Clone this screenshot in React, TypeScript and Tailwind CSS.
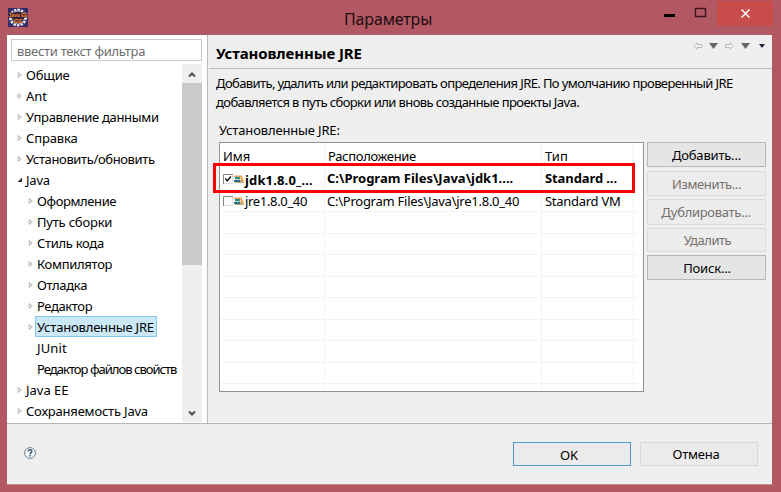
import React from "react";

type Node = { label: string; level: number; open?: boolean; leaf?: boolean; selected?: boolean; ls: string };

const tree: Node[] = [
  { label: "Общие", level: 0, ls: "tracking-[-0.2px]" },
  { label: "Ant", level: 0, ls: "tracking-normal" },
  { label: "Управление данными", level: 0, ls: "tracking-[-0.33px]" },
  { label: "Справка", level: 0, ls: "tracking-[-0.15px]" },
  { label: "Установить/обновить", level: 0, ls: "tracking-[-0.37px]" },
  { label: "Java", level: 0, open: true, ls: "tracking-[-0.2px]" },
  { label: "Оформление", level: 1, ls: "tracking-[-0.4px]" },
  { label: "Путь сборки", level: 1, ls: "tracking-[-0.2px]" },
  { label: "Стиль кода", level: 1, ls: "tracking-[-0.3px]" },
  { label: "Компилятор", level: 1, ls: "tracking-[-0.3px]" },
  { label: "Отладка", level: 1, ls: "tracking-[-0.3px]" },
  { label: "Редактор", level: 1, ls: "tracking-[-0.4px]" },
  { label: "Установленные JRE", level: 1, selected: true, ls: "tracking-[-0.18px]" },
  { label: "JUnit", level: 1, leaf: true, ls: "tracking-[0.15px]" },
  { label: "Редактор файлов свойств", level: 1, leaf: true, ls: "tracking-[-0.98px]" },
  { label: "Java EE", level: 0, ls: "tracking-normal" },
  { label: "Сохраняемость Java", level: 0, ls: "tracking-[-0.2px]" },
];

function Twisty({ node }: { node: Node }) {
  return (
    <svg className="mr-px size-[6px] shrink-0" viewBox="0 0 6 6">
      {node.open ? (
        <path d="M5 0.5V5H0.5Z" fill="#333" />
      ) : node.leaf ? null : (
        <path d="M1.2 0.6V5.4L4.2 3Z" fill="#fff" stroke="#a0a0a0" strokeWidth="0.8" />
      )}
    </svg>
  );
}

function TreeRow({ node }: { node: Node }) {
  return (
    <div className={"flex h-[21px] items-center " + (node.level ? "pl-[21px]" : "pl-[10px]")}>
      <Twisty node={node} />
      <span
        className={
          "flex h-[21px] items-center border pl-px pr-[2px] " +
          node.ls +
          (node.selected ? " border-[#86c8ea] bg-[#cbe8f8]" : " border-transparent")
        }
      >
        {node.label}
      </span>
    </div>
  );
}

function Chevron({ down }: { down?: boolean }) {
  return (
    <svg className="size-[8px]" viewBox="0 0 8 8">
      <path d={down ? "M1 2.5L4 5.5L7 2.5" : "M1 5.5L4 2.5L7 5.5"} fill="none" stroke="#505050" strokeWidth="2" />
    </svg>
  );
}

function Books() {
  return (
    <svg className="h-[8px] w-[10px] shrink-0" viewBox="0 0 10 8">
      <rect x="0" y="0.5" width="6" height="1.5" fill="#e5a25a" />
      <rect x="1" y="2" width="5" height="2" fill="#2f8a86" />
      <rect x="1" y="4" width="5" height="1" fill="#b9d3c6" />
      <rect x="0" y="5" width="6.5" height="2" fill="#2b6f86" />
      <path d="M6 0.5L7.4 0.3L10 6.5L7.3 7Z" fill="#f09a3c" />
      <path d="M1 7.4H10" stroke="#a3803f" strokeWidth="0.8" />
    </svg>
  );
}

function Check({ on }: { on?: boolean }) {
  return (
    <svg className="h-[10px] w-[10px] shrink-0" viewBox="0 0 10 10">
      <rect width="10" height="10" fill="#fff" />
      <path d="M0.5 10V0.5H10" fill="none" stroke="#858585" />
      <path d="M9.5 1V9.5H1" fill="none" stroke="#dedede" />
      {on && <path d="M2.3 4.3L4.2 6.8L8 2.5" fill="none" stroke="#111" strokeWidth="1.4" />}
    </svg>
  );
}

function Arrow({ right }: { right?: boolean }) {
  return (
    <svg className={"h-[8px] w-[9px]" + (right ? " -scale-x-100" : "")} viewBox="0 0 9 8">
      <path d="M0.7 4L4 0.7V2.5H8.4V5.5H4V7.3Z" fill="#f6f6f6" stroke="#b2b2b2" strokeWidth="0.9" />
    </svg>
  );
}

function Triangle({ small }: { small?: boolean }) {
  return (
    <svg className={small ? "h-[4px] w-[6px]" : "h-[6px] w-[9px]"} viewBox="0 0 9 6" preserveAspectRatio="none">
      <path d="M0 0H9L4.5 6Z" fill={small ? "#24203a" : "#666"} />
    </svg>
  );
}

function SideButton({ label, cls }: { label: string; cls: string }) {
  return <button className={"flex w-[119px] items-center justify-center border " + cls}>{label}</button>;
}

const gridRows = [0, 1, 2, 3, 4, 5, 6, 7];

export default function App() {
  return (
    <div className="flex h-[492px] w-[781px] flex-col overflow-hidden bg-[#b15863] font-['Noto_Sans','Open_Sans',sans-serif] text-[13px] leading-[18px] text-black">
      <header className="flex h-[35px] shrink-0">
        <svg className="ml-2 mt-2 size-[20px]" viewBox="0 0 20 20">
          <rect width="20" height="19" fill="#332b67" />
          <circle cx="10" cy="9.5" r="7.8" fill="none" stroke="#e8e4e4" strokeWidth="2.4" strokeDasharray="2.4 1.2" />
          <circle cx="10" cy="9.5" r="6.6" fill="#2b2145" stroke="#d9d5da" />
          <rect x="1" y="4.5" width="18" height="5" fill="#3a2440" />
          <g fill="#f5841f" fontWeight="bold" fontFamily="Liberation Sans" textAnchor="middle">
            <text x="10" y="9" fontSize="5">Java EE</text>
            <text x="10" y="15" fontSize="5.5">IDE</text>
          </g>
        </svg>
        <div className="flex-1 pl-[316px] pt-[8px] text-[16px] leading-[22px] tracking-[-0.15px] text-[#1c0d10]">Параметры</div>
        <svg className="mt-[7px] h-[11px] w-[44px]" viewBox="0 0 44 11">
          <rect x="0" y="7" width="11" height="3" fill="#000" />
          <rect x="31.5" y="1.5" width="10" height="8" fill="none" stroke="#3a151b" strokeWidth="1.4" />
        </svg>
        <div className="ml-[9px] mr-[8px] mt-px flex h-[25px] w-[56px] items-center justify-center bg-[#c84c4a]">
          <svg className="size-[9px]" viewBox="0 0 9 9">
            <path d="M0.5 0.5L8.5 8.5M8.5 0.5L0.5 8.5" stroke="#fff" strokeWidth="1.5" />
          </svg>
        </div>
      </header>

      <main className="ml-[7px] flex h-[450px] w-[765px] shrink-0 flex-col border-b border-[#c79297] bg-[#efefef]">
        <div className="flex h-[389px] shrink-0 border-b border-[#b5b5b5]">
          <aside className="flex w-[201px] shrink-0 flex-col border-r border-[#b9b9b9] bg-white">
            <div className="ml-[4px] mt-[4px] flex h-[22px] w-[191px] items-center border border-[#c8c8c8] pl-[5px] pt-[2px] tracking-[-0.3px] text-[#6d6d6d]">
              ввести текст фильтра
            </div>
            <div className="mt-[3px] flex h-[357px] justify-between pr-[5px]">
              <div className="w-[175px] whitespace-nowrap">
                {tree.map((n) => (
                  <TreeRow key={n.label} node={n} />
                ))}
              </div>
              <div className="flex h-[358px] w-[20px] shrink-0 flex-col bg-[#efefef]">
                <div className="flex h-[19px] items-center justify-center pt-[2px]"><Chevron /></div>
                <div className="h-[182px] bg-[#cacaca]" />
                <div className="flex flex-1 items-end justify-center pb-[5px]"><Chevron down /></div>
              </div>
            </div>
          </aside>

          <section className="flex min-w-0 flex-1 flex-col">
            <div className="ml-px flex h-[34px] shrink-0 justify-between border-b border-[#b9b9b9]">
              <h1 className="pl-[7px] pt-[7px] text-[15px] font-bold leading-[22px] tracking-[-0.1px]">Установленные JRE</h1>
              <div className="flex h-[22px] items-center pr-[7px]">
                <Arrow />
                <span className="ml-[7px] flex"><Triangle /></span>
                <span className="ml-[7px] flex"><Arrow right /></span>
                <span className="ml-[7px] flex"><Triangle /></span>
                <span className="ml-[9px] flex"><Triangle small /></span>
              </div>
            </div>
            <p className="whitespace-nowrap pl-[8px] pt-[5px] leading-[19px]">
              <span className="tracking-[-0.6px]">Добавить, удалить или редактировать определения JRE. По умолчанию проверенный JRE</span>
              <br />
              <span className="tracking-[-0.59px]">добавляется в путь сборки или вновь созданные проекты Java.</span>
            </p>
            <div className="pl-[11px] pt-[9px] tracking-[-0.15px]">Установленные JRE:</div>

            <div className="ml-[11px] mt-[3px] flex gap-[3px]">
              <div className="relative h-[250px] w-[425px] shrink-0 border border-[#929292] bg-white">
                <div className="grid h-full grid-cols-[104px_1px_216px_1px_91px_1px_1fr]">
                  <i /><i className="bg-[#f2f2f2]" /><i /><i className="bg-[#f2f2f2]" /><i /><i className="bg-[#f2f2f2]" /><i />
                </div>
                <div className="absolute inset-0 whitespace-nowrap">
                  <div className="grid h-[25px] grid-cols-[104px_217px_1fr] pt-[4px]">
                    <span className="pl-[3px]">Имя</span>
                    <span className="pl-[4px] tracking-[-0.33px]">Расположение</span>
                    <span className="pl-[4px]">Тип</span>
                  </div>
                  <div className="grid h-[21px] grid-cols-[104px_217px_1fr] items-center font-bold">
                    <span className="flex items-center pl-[3px]"><Check on /><span className="ml-px mr-px"><Books /></span><span className="pt-[3px] tracking-[0.15px]">jdk1.8.0_...</span></span>
                    <span className="pb-[2px] pl-[3px]">C:\Program Files\Java\jdk1....</span>
                    <span className="pb-[2px] pl-[4px] tracking-[-0.1px]">Standard ...</span>
                  </div>
                  <div className="grid h-[22px] grid-cols-[104px_217px_1fr] items-center pt-px">
                    <span className="flex items-center pl-[3px] tracking-[-0.33px]"><Check /><span className="ml-px mr-px"><Books /></span>jre1.8.0_40</span>
                    <span className="pl-[3px] tracking-[-0.25px]">C:\Program Files\Java\jre1.8.0_40</span>
                    <span className="pl-[4px] tracking-[-0.28px]">Standard VM</span>
                  </div>
                  {gridRows.map((r) => (
                    <div key={r} className="h-[21.5px] border-t border-[#f3f3f3]" />
                  ))}
                  <div className="border-t border-[#f3f3f3]" />
                </div>
                <div className="absolute -left-[7px] top-[20px] h-[30px] w-[422px] border-[3px] border-[#fb0007]" />
              </div>
              <div className="flex flex-col">
                <SideButton label="Добавить..." cls="h-[25px] border-[#b8b8b8] bg-[#e5e5e5] pt-px tracking-[-0.2px]" />
                <SideButton label="Изменить..." cls="mt-[4px] h-[25px] border-[#dadada] bg-[#ececec] tracking-[-0.35px] text-[#77706d]" />
                <SideButton label="Дублировать..." cls="mt-[3px] h-[26px] border-[#dadada] bg-[#ececec] pr-px tracking-[-0.3px] text-[#77706d]" />
                <SideButton label="Удалить" cls="mt-[3px] h-[24px] border-[#dadada] bg-[#ececec] pl-[2px] tracking-[-0.45px] text-[#77706d]" />
                <SideButton label="Поиск..." cls="mt-[3px] h-[25px] border-[#b8b8b8] bg-[#e5e5e5] pl-px tracking-[-0.2px]" />
              </div>
            </div>
          </section>
        </div>

        <footer className="flex flex-1 pl-[17px]">
          <svg className="mt-[23px] size-[12px]" viewBox="0 0 12 12">
            <circle cx="6" cy="6" r="5.4" fill="#f5f7f9" stroke="#6c7f92" />
            <path d="M4.2 4.4C4.2 2.2 7.9 2.3 7.9 4.3C7.9 5.6 6 5.6 6 7.2" fill="none" stroke="#3b536c" strokeWidth="1.4" />
            <rect x="5.3" y="8" width="1.5" height="1.5" fill="#3b536c" />
          </svg>
          <button className="ml-[477px] mt-[18px] flex h-[24px] w-[118px] items-center justify-center border border-[#4c9fcd] bg-[#ebebeb] pr-[6px] pt-px">OK</button>
          <button className="ml-[9px] mt-[18px] flex h-[24px] w-[118px] items-center justify-center border border-[#d8d8d8] bg-[#ebebeb] pr-[6px] tracking-[-0.25px]">Отмена</button>
        </footer>
      </main>
    </div>
  );
}
